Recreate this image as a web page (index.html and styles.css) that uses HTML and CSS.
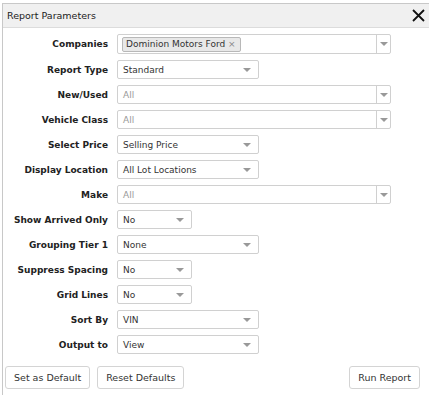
FILE: index.html
```html
<!DOCTYPE html>
<html>
<head>
  <link rel="stylesheet" href="styles.css">
</head>
<body>
  <div class="dialog">
    <div class="dialog-header">
      <span class="dialog-title">Report Parameters</span>
      <button class="close" aria-label="Close">
        <svg width="13" height="13" viewBox="0 0 13 13">
          <path d="M1 1 L12 12 M12 1 L1 12" stroke="#111" stroke-width="1.8" fill="none"/>
        </svg>
      </button>
    </div>

    <div class="params">
      <label class="param-label">Companies</label>
      <div class="select wide multi">
        <span class="chip">Dominion Motors Ford <span class="chip-x">×</span></span>
        <span class="arrow-box"><span class="arrow"></span></span>
      </div>

      <label class="param-label">Report Type</label>
      <div class="select narrow"><span class="value">Standard</span><span class="arrow"></span></div>

      <label class="param-label">New/Used</label>
      <div class="select wide"><span class="value placeholder">All</span><span class="arrow-box"><span class="arrow"></span></span></div>

      <label class="param-label">Vehicle Class</label>
      <div class="select wide"><span class="value placeholder">All</span><span class="arrow-box"><span class="arrow"></span></span></div>

      <label class="param-label">Select Price</label>
      <div class="select narrow"><span class="value">Selling Price</span><span class="arrow"></span></div>

      <label class="param-label">Display Location</label>
      <div class="select narrow"><span class="value">All Lot Locations</span><span class="arrow"></span></div>

      <label class="param-label">Make</label>
      <div class="select wide"><span class="value placeholder">All</span><span class="arrow-box"><span class="arrow"></span></span></div>

      <label class="param-label">Show Arrived Only</label>
      <div class="select small"><span class="value">No</span><span class="arrow"></span></div>

      <label class="param-label">Grouping Tier 1</label>
      <div class="select narrow"><span class="value">None</span><span class="arrow"></span></div>

      <label class="param-label">Suppress Spacing</label>
      <div class="select small"><span class="value">No</span><span class="arrow"></span></div>

      <label class="param-label">Grid Lines</label>
      <div class="select small"><span class="value">No</span><span class="arrow"></span></div>

      <label class="param-label">Sort By</label>
      <div class="select narrow"><span class="value">VIN</span><span class="arrow"></span></div>

      <label class="param-label">Output to</label>
      <div class="select narrow"><span class="value">View</span><span class="arrow"></span></div>
    </div>

    <div class="actions">
      <button class="btn">Set as Default</button>
      <button class="btn">Reset Defaults</button>
      <button class="btn run">Run Report</button>
    </div>
  </div>
</body>
</html>
```

FILE: styles.css
```css
body {
  margin: 0;
  background: white;
  font-family: "DejaVu Sans", Verdana, sans-serif;
  color: #333;
}

.dialog {
  margin: 3px 0 0 2px;
  border-top: 1px solid #c8c8c8;
  border-left: 1px solid #c8c8c8;
  height: 392px;
}

.dialog-header {
  display: flex;
  align-items: center;
  justify-content: space-between;
  height: 23px;
  background: #f0f0f0;
  border-bottom: 1px solid #dcdcdc;
  padding: 0 4px 0 4px;
}

.dialog-title {
  font-size: 9.5px;
  color: #222;
}

.close {
  border: none;
  background: none;
  padding: 0;
  display: flex;
}

.params {
  display: grid;
  grid-template-columns: 105px auto;
  grid-template-rows: 20px repeat(12, 19px);
  column-gap: 9px;
  row-gap: 6px;
  align-items: center;
  padding-top: 6px;
}

.param-label {
  text-align: right;
  font-weight: bold;
  font-size: 9px;
  color: #222;
}

.select {
  box-sizing: border-box;
  height: 19px;
  display: flex;
  align-items: center;
  justify-content: space-between;
  border: 1px solid #d0d0d0;
  border-radius: 2px;
  padding-left: 5px;
  padding-right: 7px;
  font-size: 9px;
  background: white;
}

.select.narrow { width: 142px; }
.select.small { width: 75px; }
.select.wide { width: 274px; padding-right: 0; }
.select.multi { height: 20px; padding-left: 4px; }

.placeholder { color: #999; }

.arrow {
  width: 0;
  height: 0;
  border-left: 4px solid transparent;
  border-right: 4px solid transparent;
  border-top: 4px solid #999;
}

.arrow-box {
  align-self: stretch;
  width: 13px;
  border-left: 1px solid #d0d0d0;
  display: flex;
  align-items: center;
  justify-content: center;
}

.chip {
  background: #e8e8e8;
  border: 1px solid #b8b8b8;
  border-radius: 2px;
  padding: 0 4px 0 3px;
  line-height: 13px;
  color: #333;
}

.chip-x {
  color: #888;
}

.actions {
  display: flex;
  gap: 7px;
  padding: 12px 9px 0 2px;
}

.btn {
  font-family: "DejaVu Sans", Verdana, sans-serif;
  font-size: 9.5px;
  color: #333;
  background: white;
  border: 1px solid #d4d4d4;
  border-radius: 3px;
  height: 23px;
  padding: 0 8px;
}

.btn.run {
  margin-left: auto;
}
```
